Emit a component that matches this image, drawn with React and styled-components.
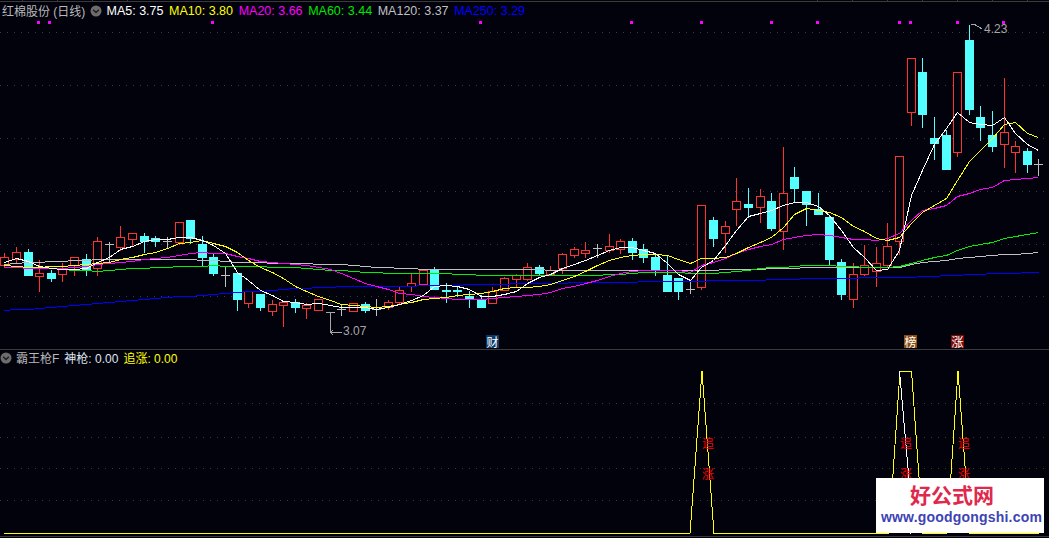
import React from 'react';
import styled, { createGlobalStyle } from 'styled-components';

const BG = '#02020d';
const RED = '#ff3232';
const CYAN = '#54ffff';
const GREY = '#c0c0c0';

// [type, body top, body bottom, wick top, wick bottom]
const candles = [
  ['r', 257, 265, 253, 267], ['r', 252, 259, 247, 262], ['c', 252, 275, 249, 275], ['r', 273, 276, 260, 291],
  ['c', 273, 278, 270, 281], ['r', 269, 274, 263, 281], ['r', 257, 265, 257, 275], ['c', 259, 270, 254, 275],
  ['r', 241, 268, 237, 275], ['d', 244, 244, 242, 262], ['r', 237, 247, 226, 250], ['r', 233, 239, 233, 245],
  ['c', 236, 241, 233, 252], ['c', 238, 241, 236, 246], ['d', 241, 241, 237, 247], ['r', 222, 242, 222, 244],
  ['c', 220, 238, 220, 243], ['c', 244, 257, 236, 265], ['c', 257, 273, 254, 275], ['d', 275, 275, 267, 286],
  ['c', 273, 299, 273, 310], ['r', 291, 303, 291, 307], ['c', 294, 307, 294, 310], ['r', 304, 311, 300, 315],
  ['r', 302, 305, 302, 326], ['c', 302, 307, 299, 312], ['r', 305, 308, 303, 318], ['r', 299, 310, 299, 310],
  ['d', 312, 312, 312, 332], ['d', 309, 309, 305, 315], ['r', 303, 311, 303, 311], ['c', 304, 310, 302, 312],
  ['d', 309, 309, 299, 315], ['r', 302, 307, 300, 309], ['r', 290, 302, 287, 303], ['r', 283, 286, 274, 291],
  ['r', 270, 284, 270, 285], ['c', 270, 289, 267, 289], ['c', 290, 291, 283, 302], ['c', 290, 291, 285, 296],
  ['c', 296, 299, 291, 307], ['c', 300, 307, 295, 307], ['r', 291, 303, 287, 303], ['r', 278, 290, 277, 290],
  ['r', 275, 279, 274, 286], ['r', 267, 279, 263, 280], ['c', 267, 273, 265, 275], ['r', 270, 274, 266, 275],
  ['r', 254, 268, 253, 273], ['r', 249, 255, 247, 257], ['r', 250, 253, 242, 257], ['d', 248, 248, 244, 257],
  ['r', 246, 250, 234, 252], ['r', 241, 249, 239, 253], ['c', 241, 252, 238, 259], ['c', 249, 257, 244, 262],
  ['c', 257, 270, 253, 275], ['c', 275, 291, 255, 291], ['c', 278, 291, 278, 299], ['d', 289, 289, 280, 293],
  ['r', 205, 287, 205, 289], ['c', 220, 238, 217, 246], ['r', 226, 233, 221, 252], ['r', 201, 209, 178, 225],
  ['c', 204, 207, 188, 217], ['r', 196, 207, 189, 222], ['c', 201, 228, 193, 230], ['r', 193, 231, 147, 249],
  ['c', 177, 188, 167, 201], ['c', 191, 204, 191, 225], ['c', 209, 214, 193, 214], ['c', 217, 259, 215, 265],
  ['c', 262, 294, 259, 299], ['r', 274, 299, 263, 307], ['r', 265, 274, 245, 275], ['r', 263, 271, 247, 286],
  ['r', 246, 265, 223, 267], ['r', 156, 241, 156, 254], ['r', 58, 112, 58, 125], ['c', 72, 114, 58, 127],
  ['c', 138, 143, 117, 159], ['c', 135, 169, 130, 169], ['r', 72, 152, 72, 156], ['c', 40, 109, 25, 114],
  ['c', 117, 127, 106, 140], ['c', 135, 146, 111, 151], ['r', 132, 144, 78, 167], ['r', 146, 152, 141, 172],
  ['c', 151, 164, 148, 172], ['d', 164, 164, 159, 175],
];

const candleX = (i) => Math.round(4.3 + i * 11.62);

const ma5 = [
  262, 258, 261, 266, 268, 269, 269, 268, 262, 257, 249, 246, 241, 239, 239, 237, 237, 240, 245, 253, 272, 280, 290,
  295, 301, 302, 304, 303, 305, 307, 307, 307, 309, 307, 304, 300, 295, 286, 285, 286, 289, 296, 296, 294, 291, 283,
  277, 274, 268, 264, 260, 255, 250, 247, 247, 250, 253, 263, 274, 280, 267, 260, 245, 230, 216, 213, 210, 205, 202,
  202, 206, 215, 230, 247, 257, 270, 269, 250, 195, 170, 144, 128, 112, 122, 124, 125, 117, 133, 144, 150,
];
const ma10 = [
  265, 266, 267, 267, 266, 266, 265, 264, 263, 262, 259, 257, 254, 252, 248, 243, 242, 240, 243, 246, 252, 260, 267,
  272, 278, 286, 291, 296, 300, 304, 305, 306, 307, 306, 304, 302, 299, 298, 297, 295, 294, 293, 291, 288, 287, 287,
  286, 284, 280, 276, 271, 265, 260, 257, 255, 254, 254, 255, 259, 263, 258, 258, 257, 253, 247, 242, 237, 227, 214,
  208, 210, 212, 217, 226, 231, 238, 240, 237, 223, 212, 205, 198, 180, 161, 150, 138, 124, 122, 133, 137,
];
const ma20 = [
  267, 267, 268, 268, 268, 268, 267, 266, 264, 263, 262, 261, 259, 258, 257, 255, 253, 252, 253, 253, 256, 258, 261,
  262, 263, 264, 265, 267, 269, 273, 278, 283, 286, 289, 293, 294, 296, 297, 298, 299, 299, 299, 298, 297, 296, 295,
  294, 292, 288, 286, 283, 280, 276, 273, 271, 270, 270, 270, 270, 272, 265, 262, 258, 253, 249, 246, 244, 239, 237,
  235, 234, 235, 237, 239, 239, 240, 238, 233, 220, 210, 208, 205, 196, 193, 189, 187, 180, 179, 178, 177,
];
const ma60 = [
  267, 267, 268, 268, 268, 269, 270, 270, 271, 270, 269, 268, 268, 267, 267, 266, 266, 266, 265, 266, 266, 266, 266,
  267, 267, 267, 268, 269, 270, 270, 271, 272, 272, 273, 273, 273, 273, 273, 273, 274, 274, 275, 275, 275, 275, 275,
  275, 275, 275, 275, 275, 275, 274, 274, 273, 272, 272, 272, 272, 273, 273, 273, 272, 271, 270, 268, 267, 267, 266,
  265, 265, 265, 266, 266, 267, 267, 267, 266, 263, 260, 257, 255, 250, 246, 244, 242, 238, 236, 234, 232,
];
const ma120 = [
  264, 263, 262, 262, 261, 261, 260, 260, 259, 259, 259, 259, 259, 259, 259, 259, 259, 260, 260, 261, 262, 262, 262,
  263, 263, 263, 263, 264, 264, 264, 265, 266, 267, 267, 268, 268, 269, 269, 269, 269, 269, 269, 269, 269, 269, 269,
  269, 270, 270, 270, 270, 270, 270, 270, 270, 270, 270, 270, 270, 270, 270, 270, 269, 269, 269, 269, 268, 268, 268,
  267, 267, 267, 267, 267, 267, 267, 267, 267, 264, 262, 261, 260, 258, 257, 256, 255, 254, 254, 253, 252,
];
const ma250 = [
  310, 309, 309, 308, 307, 306, 305, 304, 303, 302, 301, 300, 299, 298, 297, 296, 296, 295, 294, 293, 292, 291, 291,
  290, 289, 288, 288, 287, 287, 286, 286, 286, 286, 286, 286, 286, 285, 285, 285, 285, 284, 284, 284, 284, 283, 283,
  283, 283, 283, 282, 282, 282, 282, 282, 282, 281, 281, 281, 281, 281, 281, 280, 280, 280, 280, 280, 279, 279, 279,
  278, 278, 278, 278, 278, 277, 277, 277, 277, 277, 276, 276, 275, 275, 274, 274, 273, 273, 273, 272, 272,
];

const maLines = [
  { data: ma250, color: '#0000ff' },
  { data: ma120, color: GREY },
  { data: ma60, color: '#00f000' },
  { data: ma20, color: '#ff00ff' },
  { data: ma10, color: '#ffff00' },
  { data: ma5, color: '#ffffff' },
];

const legendItems = [
  { text: 'MA5: 3.75', color: '#ffffff' },
  { text: 'MA10: 3.80', color: '#ffff00' },
  { text: 'MA20: 3.66', color: '#ff00ff' },
  { text: 'MA60: 3.44', color: '#00e600' },
  { text: 'MA120: 3.37', color: '#c0c0c0' },
  { text: 'MA250: 3.29', color: '#0000ff' },
];

const signalDots = [38, 49, 212, 480, 631, 701, 771, 817, 899, 910, 957, 1003];
const mainGrid = [32, 85, 138, 191, 244, 296];
const subGrid = [53, 87, 118, 150];
const topTicks = [22, 57, 92, 127, 817, 852, 887, 922, 957, 992, 1027];
const signalLabels = [
  { x: 708, chars: ['追', '涨'] },
  { x: 906, chars: ['追', '涨'] },
  { x: 964, chars: ['追', '涨'] },
];

const GlobalStyle = createGlobalStyle`
  html, body {
    margin: 0;
    padding: 0;
    background: ${BG};
  }
`;

const Screen = styled.div`
  width: 1049px;
  height: 538px;
  overflow: hidden;
  display: flex;
  flex-direction: column;
  background: ${BG};
  font-family: 'Liberation Sans', 'Noto Sans CJK SC', sans-serif;
  font-size: 12.5px;
`;

const Pane = styled.section`
  position: relative;
  height: ${(p) => p.$height}px;
  flex: none;
  box-sizing: border-box;
  border-bottom: 1px solid #3a3a3a;
`;

const ChartSvg = styled.svg`
  position: absolute;
  inset: 0;
  display: block;
`;

const Legend = styled.div`
  position: relative;
  display: flex;
  align-items: center;
  gap: ${(p) => p.$gap}px;
  height: ${(p) => p.$height}px;
  padding-left: ${(p) => p.$left}px;
  white-space: nowrap;
`;

const PaneTitle = styled.span`
  color: #b9b9b9;
  font-size: 12px;
`;

const LegendValue = styled.span`
  color: ${(p) => p.color};
  font-size: ${(p) => p.$size || 12.5}px;
`;

const FoldIcon = styled.svg`
  flex: none;
  width: 12px;
  height: 12px;
  margin: 0 -1px;
`;

const PriceTag = styled.span`
  position: absolute;
  left: ${(p) => p.$x}px;
  top: ${(p) => p.$y}px;
  color: #a6a6a6;
  font-size: 12px;
  line-height: 14px;
`;

const Badge = styled.span`
  position: absolute;
  left: ${(p) => p.$x}px;
  top: 335px;
  width: 13px;
  height: 13px;
  display: flex;
  align-items: center;
  justify-content: center;
  background: ${(p) => p.$bg};
  color: #fff;
  font-size: 12px;
`;

const SignalChar = styled.span`
  position: absolute;
  left: ${(p) => p.$x - 6}px;
  top: ${(p) => p.$y}px;
  color: #f00;
  font-size: 12px;
  line-height: 14px;
`;

const Watermark = styled.div`
  position: absolute;
  left: 876px;
  bottom: 3px;
  width: 168px;
  height: 55px;
  background: #fff;
  display: flex;
  flex-direction: column;
  align-items: center;
`;

const WatermarkTitle = styled.div`
  margin: 3px 16px 0 0;
  height: 27px;
  line-height: 27px;
  color: #e0284c;
  font-family: 'Noto Sans CJK SC', sans-serif;
  font-size: 21px;
  font-weight: 700;
`;

const WatermarkUrl = styled.div`
  margin: 1px 0 0 3px;
  color: #3d43b4;
  font-size: 14px;
  line-height: 16px;
  font-weight: 700;
  font-family: 'Liberation Sans', sans-serif;
  letter-spacing: 0.2px;
`;

const Fold = () => (
  <FoldIcon viewBox="0 0 12 12">
    <circle cx="6" cy="6" r="5.5" fill="#6c6c6c" />
    <path d="M3.2 4.8 L6 7.6 L8.8 4.8" fill="none" stroke="#1c1c1c" strokeWidth="1.4" />
  </FoldIcon>
);

const toPoints = (data) => data.map((y, i) => `${candleX(i) + 0.5},${y + 0.5}`).join(' ');

const Candle = ({ candle, index }) => {
  const [type, top, bottom, wickTop, wickBottom] = candle;
  const x = candleX(index);
  const wickColor = type === 'r' ? RED : type === 'c' ? CYAN : GREY;
  return (
    <g>
      <line x1={x + 0.5} x2={x + 0.5} y1={wickTop} y2={wickBottom + 1} stroke={wickColor} />
      {type === 'r' && (
        <rect x={x - 3.5} y={top + 0.5} width={8} height={bottom - top} fill={BG} stroke={RED} />
      )}
      {type === 'c' && <rect x={x - 4} y={top} width={9} height={bottom - top + 1} fill={CYAN} />}
      {type === 'd' && <line x1={x - 4} x2={x + 5} y1={top + 0.5} y2={top + 0.5} stroke={GREY} />}
    </g>
  );
};

const GridLines = ({ rows }) =>
  rows.map((y) => (
    <line key={y} x1="0" x2="1049" y1={y + 0.5} y2={y + 0.5} stroke="#3c3c3c" strokeDasharray="1 6" />
  ));

const MainChart = () => (
  <ChartSvg width="1049" height="349" viewBox="0 0 1049 349" shapeRendering="crispEdges">
    <line x1="0" x2="1049" y1="1.5" y2="1.5" stroke="#3a3a3a" />
    {topTicks.map((x) => (
      <line key={x} x1={x + 0.5} x2={x + 0.5} y1="0" y2="2" stroke="#3a3a3a" />
    ))}
    <GridLines rows={mainGrid} />
    {signalDots.map((x) => (
      <rect key={x} x={x - 1} y="21" width="3" height="3" fill="#ff00ff" />
    ))}
    {candles.map((c, i) => (
      <Candle key={i} candle={c} index={i} />
    ))}
    {maLines.map((l) => (
      <polyline key={l.color} points={toPoints(l.data)} fill="none" stroke={l.color} />
    ))}
    {/* high and low arrows */}
    <path d="M971 25 L974 24 L982 29" fill="none" stroke="#a6a6a6" />
    <path d="M326 312.5 H334 M330.5 312 V332 M330.5 332.5 H342 M333 330 L330.5 332.5 L333 335" fill="none" stroke="#a6a6a6" />
  </ChartSvg>
);

const SubChart = () => (
  <ChartSvg width="1049" height="187" viewBox="0 0 1049 187" shapeRendering="crispEdges">
    <GridLines rows={subGrid} />
    <polyline points="4,183.5 690,183.5 702,21 714,183.5 889,183.5" fill="none" stroke="#ffff00" />
    <polyline points="889,183.5 900,21 911.5,21 923,183.5 947,183.5 958,21 970,183.5 1039,183.5" fill="none" stroke="#ffff00" />
    <polyline points="899.5,21 908,118 911,183.5" fill="none" stroke="#ffffff" />
  </ChartSvg>
);

const App = () => (
  <Screen>
    <GlobalStyle />
    <Pane $height={350}>
      <MainChart />
      <Legend $height={21} $left={2} $gap={5.6}>
        <PaneTitle>红棉股份 (日线)</PaneTitle>
        <Fold />
        {legendItems.map((m) => (
          <LegendValue key={m.text} color={m.color}>
            {m.text}
          </LegendValue>
        ))}
      </Legend>
      <PriceTag $x={984} $y={22}>4.23</PriceTag>
      <PriceTag $x={343} $y={324}>3.07</PriceTag>
      <Badge $x={486} $bg="#0c3a66">财</Badge>
      <Badge $x={904} $bg="#8a4c12">榜</Badge>
      <Badge $x={951} $bg="#7c0a0a">涨</Badge>
    </Pane>
    <Pane $height={187}>
      <SubChart />
      <Legend $height={15} $left={1} $gap={5}>
        <Fold />
        <PaneTitle>霸王枪F</PaneTitle>
        <LegendValue color="#dfe6f0" $size={12}>神枪: 0.00</LegendValue>
        <LegendValue color="#ffff00" $size={12}>追涨: 0.00</LegendValue>
      </Legend>
      {signalLabels.map((s) =>
        s.chars.map((ch, i) => (
          <SignalChar key={`${s.x}-${ch}`} $x={s.x} $y={87 + i * 31}>
            {ch}
          </SignalChar>
        ))
      )}
      <Watermark>
        <WatermarkTitle>好公式网</WatermarkTitle>
        <WatermarkUrl>www.goodgongshi.com</WatermarkUrl>
      </Watermark>
    </Pane>
  </Screen>
);

export default App;
